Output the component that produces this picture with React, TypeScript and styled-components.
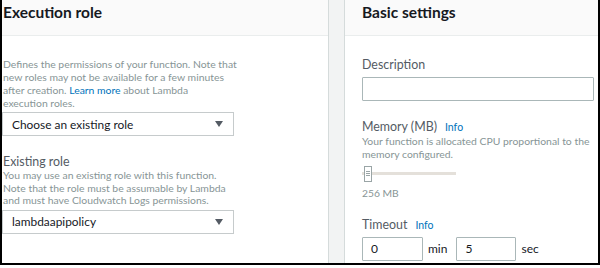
import styled, { createGlobalStyle } from 'styled-components'

const GlobalStyle = createGlobalStyle`
  html, body {
    margin: 0;
    padding: 0;
    background: #ffffff;
  }
  body {
    font-family: Lato, "Liberation Sans", Arial, sans-serif;
    width: 600px;
    height: 268px;
    overflow: hidden;
  }
`

const Frame = styled.div`
  width: 600px;
  height: 265px;
  box-sizing: border-box;
  border-left: 2px solid #000;
  border-right: 2px solid #000;
  border-bottom: 2px solid #000;
  display: grid;
  grid-template-columns: 326px 17px 1fr;
  overflow: hidden;
`

const Panel = styled.section`
  display: flex;
  flex-direction: column;
  min-width: 0;
`

const Divider = styled.div`
  box-sizing: border-box;
  background: #f2f3f3;
  border-left: 1px solid #d5dbdb;
  border-right: 1px solid #d5dbdb;
`

const Header = styled.div<{ $inset: number }>`
  box-sizing: border-box;
  height: 36px;
  background: #fafafa;
  border-bottom: 1px solid #eaeded;
  padding: 3px 0 0 ${(p) => p.$inset}px;
`

const Title = styled.h2`
  margin: 0;
  font-size: 15.5px;
  line-height: 18px;
  font-weight: 700;
  color: #16191f;
`

const Body = styled.div<{ $inset: number; $top: number }>`
  display: flex;
  flex-direction: column;
  align-items: flex-start;
  padding: ${(p) => p.$top}px 0 0 ${(p) => p.$inset}px;
`

const Help = styled.p<{ $lh?: number }>`
  margin: 0;
  font-size: 10.4px;
  line-height: ${(p) => p.$lh ?? 13}px;
  color: #879596;
  white-space: nowrap;
`

const Link = styled.a`
  color: #0073bb;
  text-decoration: none;
`

const Label = styled.div<{ $mt?: number }>`
  display: flex;
  align-items: baseline;
  gap: 8px;
  margin-top: ${(p) => p.$mt ?? 0}px;
  font-size: 12.4px;
  line-height: 15px;
  color: #545b64;
  white-space: nowrap;
`

const Info = styled.span`
  font-size: 10.5px;
  color: #0073bb;
`

const Select = styled.div<{ $mt: number }>`
  box-sizing: border-box;
  width: 232px;
  height: 24px;
  margin: ${(p) => p.$mt}px 0 0 -1px;
  border: 1px solid #c6cbcc;
  display: flex;
  align-items: center;
  justify-content: space-between;
  padding: 0 10px 0 9px;
  font-size: 11.9px;
  color: #16191f;
`

const Caret = () => (
  <svg width="8" height="6" viewBox="0 0 8 6">
    <path d="M0 0 L8 0 L4 6 Z" fill="#545b64" />
  </svg>
)

const TextInput = styled.div<{ $w: number; $mt?: number }>`
  box-sizing: border-box;
  width: ${(p) => p.$w}px;
  height: 24px;
  margin-top: ${(p) => p.$mt ?? 0}px;
  border: 1px solid #aab7b8;
  border-radius: 1px;
  padding-left: 8px;
  display: flex;
  align-items: center;
  font-size: 12px;
  color: #16191f;
`

const Slider = styled.div`
  position: relative;
  width: 94px;
  height: 18px;
  margin-top: 3px;
  display: flex;
  align-items: center;
`

const Track = styled.div`
  width: 100%;
  height: 3px;
  background: #e4e0da;
`

const Thumb = styled.div`
  position: absolute;
  left: 2px;
  top: 1px;
  box-sizing: border-box;
  width: 8px;
  height: 16px;
  background: #fff;
  border: 1px solid #9aa5a6;
  display: flex;
  flex-direction: column;
  align-items: center;
  justify-content: center;
  gap: 1px;

  span {
    display: block;
    width: 4px;
    height: 1px;
    background: #9aa5a6;
  }
`

const Small = styled.div`
  margin-top: 4px;
  font-size: 10.3px;
  line-height: 13px;
  color: #879596;
`

const TimeRow = styled.div`
  display: flex;
  align-items: center;
  margin-top: 4px;
`

const Unit = styled.span`
  font-size: 12px;
  color: #16191f;
  margin: 0 9px 0 5px;
`

export default function App() {
  return (
    <>
      <GlobalStyle />
      <Frame>
        <Panel>
          <Header $inset={1}>
            <Title>Execution role</Title>
          </Header>
          <Body $inset={1} $top={22}>
            <Help>
              Defines the permissions of your function. Note that
              <br />
              new roles may not be available for a few minutes
              <br />
              after creation. <Link>Learn more</Link> about Lambda
              <br />
              execution roles.
            </Help>
            <Select $mt={2}>
              <span>Choose an existing role</span>
              <Caret />
            </Select>
            <Label $mt={18}>Existing role</Label>
            <Help $lh={12.5}>
              You may use an existing role with this function.
              <br />
              Note that the role must be assumable by Lambda
              <br />
              and must have Cloudwatch Logs permissions.
            </Help>
            <Select $mt={3}>
              <span>lambdaapipolicy</span>
              <Caret />
            </Select>
          </Body>
        </Panel>
        <Divider />
        <Panel>
          <Header $inset={17}>
            <Title>Basic settings</Title>
          </Header>
          <Body $inset={17} $top={21}>
            <Label>Description</Label>
            <TextInput $w={232} $mt={5} />
            <Label $mt={18}>
              Memory (MB) <Info>Info</Info>
            </Label>
            <Help $lh={13.3}>
              Your function is allocated CPU proportional to the
              <br />
              memory configured.
            </Help>
            <Slider>
              <Track />
              <Thumb>
                <span />
                <span />
                <span />
              </Thumb>
            </Slider>
            <Small>256 MB</Small>
            <Label $mt={17}>
              Timeout <Info>Info</Info>
            </Label>
            <TimeRow>
              <TextInput $w={61}>0</TextInput>
              <Unit>min</Unit>
              <TextInput $w={60}>5</TextInput>
              <Unit>sec</Unit>
            </TimeRow>
          </Body>
        </Panel>
      </Frame>
    </>
  )
}
